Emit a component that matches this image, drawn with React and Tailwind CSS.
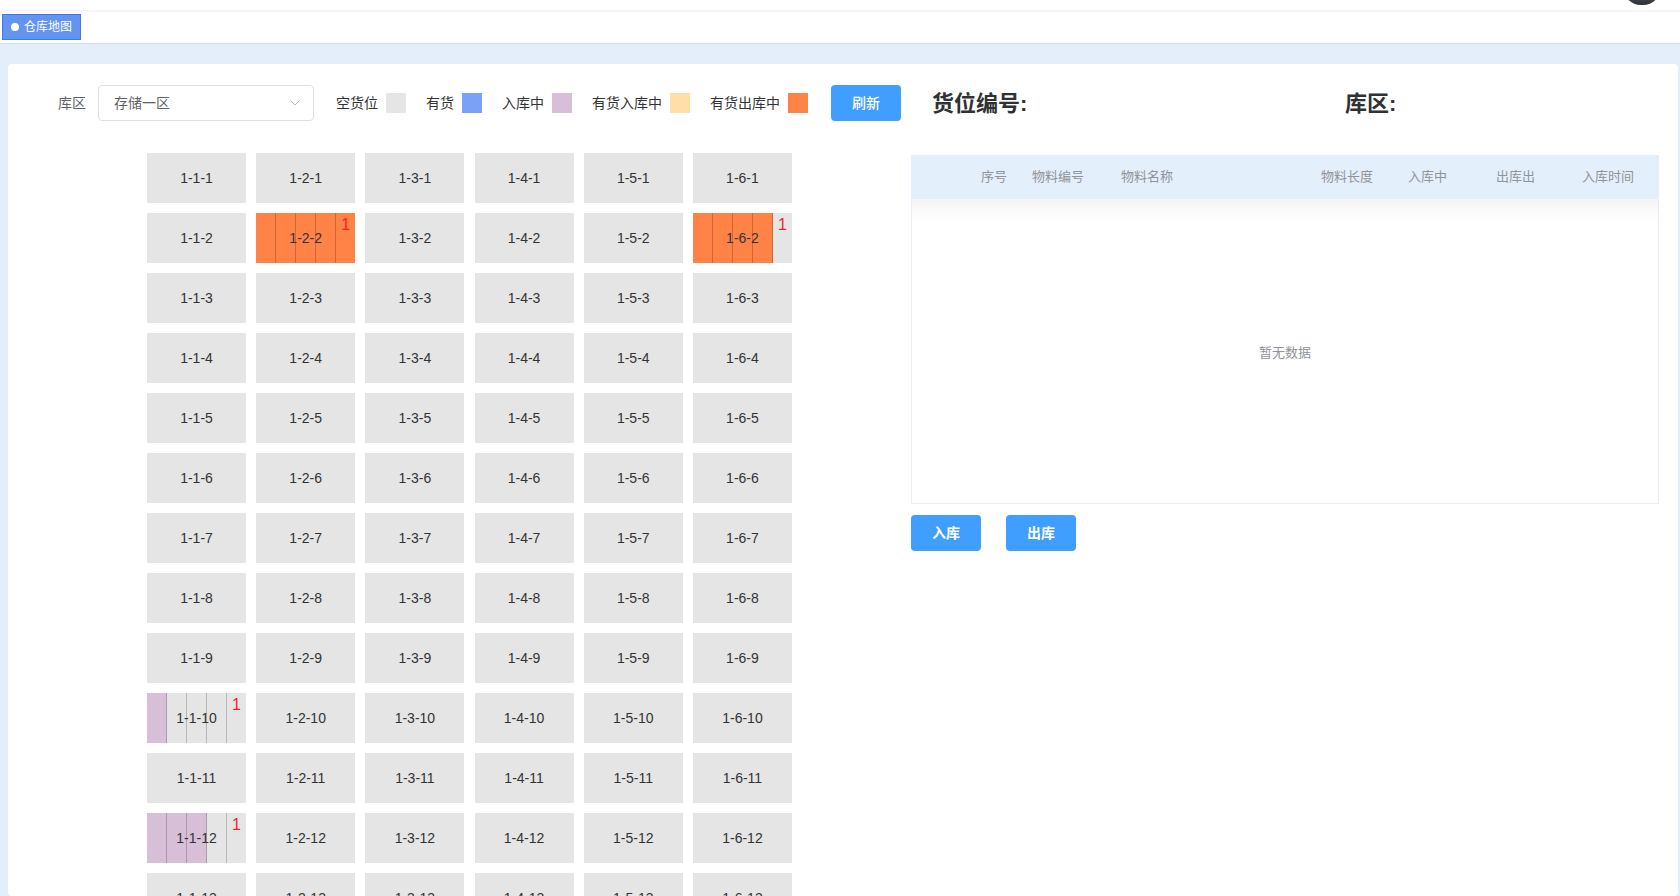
import { ChevronDown } from "lucide-react";

const FONT = { fontFamily: '"Liberation Sans", "Noto Sans CJK SC", sans-serif' };

// special slots: how many of the 5 segments are filled, and the fill colour
const SPECIAL = {
  "1-2-2": { fill: 5, color: "bg-[#ff8347]" },
  "1-6-2": { fill: 4, color: "bg-[#ff8347]" },
  "1-1-10": { fill: 1, color: "bg-[#d8bfd8]" },
  "1-1-12": { fill: 3, color: "bg-[#d8bfd8]" },
};

const legends = [
  { label: "空货位", color: "bg-[#e5e5e5]" },
  { label: "有货", color: "bg-[#7ba0f7]" },
  { label: "入库中", color: "bg-[#d8bfd8]" },
  { label: "有货入库中", color: "bg-[#ffdeaa]" },
  { label: "有货出库中", color: "bg-[#ff8347]" },
];

const Slot = ({ label }) => {
  const sp = SPECIAL[label];
  if (!sp) {
    return (
      <div className="w-[99px] h-[50px] bg-[#e5e5e5] flex items-center justify-center text-[14px] text-[#333]">
        {label}
      </div>
    );
  }
  return (
    <div className="relative w-[99px] h-[50px] bg-[#e5e5e5] flex">
      {[0, 1, 2, 3, 4].map((i) => (
        <div
          key={i}
          className={`relative flex-1 h-full ${i < 4 ? "border-r border-black/20" : ""} ${
            i < sp.fill ? sp.color : ""
          }`}
        >
          {i === 4 && (
            <span className="absolute left-0 right-0 top-[3px] text-center text-[16px] leading-[18px] text-[#f5222d]">
              1
            </span>
          )}
        </div>
      ))}
      <div className="absolute inset-0 flex items-center justify-center text-[14px] text-[#333] pointer-events-none">
        {label}
      </div>
    </div>
  );
};

const heads = [
  { t: "序号", w: "w-[51px]" },
  { t: "物料编号", w: "w-[89px]" },
  { t: "物料名称", w: "w-[200px]" },
  { t: "物料长度", w: "w-[87px]" },
  { t: "入库中", w: "w-[88px]" },
  { t: "出库出", w: "w-[86px]" },
  { t: "入库时间", w: "" },
];

export default function App() {
  const rows = Array.from({ length: 13 }, (_, i) => i + 1);
  const cols = [1, 2, 3, 4, 5, 6];

  return (
    <div className="w-[1680px] h-[896px] overflow-hidden bg-[#e4eefa] flex flex-col" style={FONT}>
      {/* top strip */}
      <div className="relative h-[10px] bg-white shadow-[0_1px_3px_rgba(0,0,0,0.08)] z-10">
        <div className="absolute top-[-31px] right-[19px] w-[38px] h-[36px] rounded-full bg-gradient-to-b from-[#8a8f96] to-[#2f3338]" />
      </div>
      {/* tag bar */}
      <div className="h-[34px] bg-white border-b border-[#d8dce5] flex items-center pl-[2px]">
        <div className="h-[26px] w-[79px] bg-[#6394f0] border border-[#3a7af2] flex items-center gap-[5px] pl-[8px] text-[12px] text-white">
          <span className="w-[8px] h-[8px] rounded-full bg-white" />
          仓库地图
        </div>
      </div>

      {/* card */}
      <div className="flex-1 mt-[20px] ml-[8px] mr-[2px] bg-white rounded-[4px] flex overflow-hidden">
        {/* left: toolbar + slot grid */}
        <div className="w-[903px] shrink-0 pt-[21px]">
          <div className="h-[36px] flex items-center pl-[50px]">
            <span className="text-[14px] text-[#606266]">库区</span>
            <div className="ml-[12px] w-[216px] h-[36px] border border-[#dcdfe6] rounded-[4px] flex items-center justify-between pl-[15px] pr-[10px]">
              <span className="text-[14px] text-[#606266]">存储一区</span>
              <ChevronDown size={16} strokeWidth={1.5} className="text-[#b4b8bf]" />
            </div>
            <div className="flex items-center ml-[22px] gap-[20px]">
              {legends.map((l) => (
                <div key={l.label} className="flex items-center gap-[8px]">
                  <span className="text-[14px] text-[#333]">{l.label}</span>
                  <span className={`w-[20px] h-[20px] ${l.color}`} />
                </div>
              ))}
            </div>
            <button className="ml-[23px] w-[70px] h-[36px] rounded-[4px] bg-[#409eff] text-white text-[14px] font-medium">
              刷新
            </button>
          </div>

          <div className="mt-[32px] pl-[139px] flex flex-col gap-[10px]">
            {rows.map((r) => (
              <div key={r} className="flex gap-[10.2px]">
                {cols.map((c) => (
                  <Slot key={c} label={`1-${c}-${r}`} />
                ))}
              </div>
            ))}
          </div>
        </div>

        {/* right: details table */}
        <div className="flex-1 pr-[19px] pt-[21px]">
          <div className="h-[36px] flex items-center pl-[21px] text-[22px] font-bold text-[#303133]">
            <span className="w-[413px]">货位编号:</span>
            <span>库区:</span>
          </div>
          <div className="mt-[34px]">
            <div className="h-[44px] bg-[#e4effc] flex items-center pl-[70px] text-[13px] text-[#909399]">
              {heads.map((h) => (
                <span key={h.t} className={h.w}>
                  {h.t}
                </span>
              ))}
            </div>
            <div className="relative h-[305px] border-x border-b border-[#ebeef5] flex items-center justify-center pt-[4px]">
              <div className="absolute top-0 left-0 right-0 h-[22px] bg-gradient-to-b from-[#f4f4f5] to-white" />
              <span className="text-[13px] text-[#909399]">暂无数据</span>
            </div>
            <div className="mt-[11px] flex gap-[25px]">
              <button className="w-[70px] h-[36px] rounded-[4px] bg-[#409eff] text-white text-[14px] font-bold">
                入库
              </button>
              <button className="w-[70px] h-[36px] rounded-[4px] bg-[#409eff] text-white text-[14px] font-bold">
                出库
              </button>
            </div>
          </div>
        </div>
      </div>
    </div>
  );
}
